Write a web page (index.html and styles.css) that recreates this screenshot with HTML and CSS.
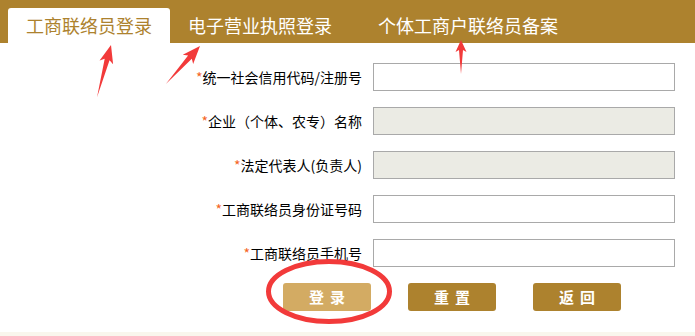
FILE: index.html
```html
<!DOCTYPE html>
<html lang="zh-CN">
<head>
<meta charset="utf-8">
<title>工商联络员登录</title>
<link rel="stylesheet" href="styles.css">
</head>
<body>
<div class="page">
  <div class="tabs">
    <div class="tab active">工商联络员登录</div>
    <div class="tab">电子营业执照登录</div>
    <div class="tab tab-third">个体工商户联络员备案</div>
  </div>
  <form class="form">
    <div class="row">
      <label class="label"><span class="star">*</span>统一社会信用代码/注册号</label>
      <input class="input" type="text">
    </div>
    <div class="row">
      <label class="label"><span class="star">*</span>企业（个体、农专）名称</label>
      <input class="input disabled" type="text" disabled>
    </div>
    <div class="row">
      <label class="label"><span class="star">*</span>法定代表人(负责人)</label>
      <input class="input disabled" type="text" disabled>
    </div>
    <div class="row">
      <label class="label"><span class="star">*</span>工商联络员身份证号码</label>
      <input class="input" type="text">
    </div>
    <div class="row">
      <label class="label"><span class="star">*</span>工商联络员手机号</label>
      <input class="input" type="text">
    </div>
    <div class="buttons">
      <button type="button" class="btn btn-login">登录</button>
      <button type="button" class="btn">重置</button>
      <button type="button" class="btn">返回</button>
    </div>
  </form>
  <div class="footer-strip"></div>
  <svg class="annotations" width="695" height="336" viewBox="0 0 695 336">
    <g fill="#f23a3a">
      <polygon transform="translate(111,45) rotate(15)" points="0,0 7,18 2.5,15 0,54 -2.5,15 -7,18"/>
      <polygon transform="translate(200,46) rotate(42)" points="0,0 7,18 2.5,15 0,51 -2.5,15 -7,18"/>
      <polygon transform="translate(461,40)" points="0,0 5.5,12 2,10 0,34 -2,10 -5.5,12"/>
    </g>
    <ellipse cx="329" cy="291.5" rx="60.5" ry="30" fill="none" stroke="#f23a3a" stroke-width="5"/>
  </svg>
</div>
</body>
</html>
```

FILE: styles.css
```css
* { box-sizing: border-box; }
html, body { margin: 0; padding: 0; background: #fff; }
body {
  font-family: "Noto Sans CJK SC", "Noto Sans", "Liberation Sans", sans-serif;
  color: #000;
}
.page {
  position: relative;
  width: 695px;
  height: 336px;
  overflow: hidden;
}
.tabs {
  display: flex;
  align-items: flex-end;
  height: 43px;
  background: #ad822e;
  padding-left: 8px;
}
.tab {
  height: 35px;
  padding: 0 18px;
  font-size: 18px;
  line-height: 35px;
  color: #fff;
  white-space: nowrap;
}
.tab.active {
  background: #fff;
  color: #ad822e;
  border-radius: 3px 3px 0 0;
}
.tab-third { margin-left: 10px; }
.form {
  padding-top: 20px;
  margin: 0;
}
.row {
  display: flex;
  align-items: center;
  height: 28px;
  margin-bottom: 16px;
}
.label {
  width: 362px;
  text-align: right;
  font-size: 14px;
  line-height: 28px;
  white-space: nowrap;
}
.star { color: #f5651f; }
.input {
  margin-left: 11px;
  width: 302px;
  height: 28px;
  border: 1px solid #a9a9a9;
  background: #fff;
  padding: 0 4px;
  font: inherit;
  outline: none;
}
.input.disabled { background: #ebebe4; }
.buttons {
  display: flex;
  gap: 37px;
  padding-left: 283px;
  height: 28px;
}
.btn {
  width: 88px;
  height: 28px;
  border: none;
  border-radius: 3px;
  background: #ad822e;
  color: #fff;
  font-family: inherit;
  font-size: 15px;
  font-weight: bold;
  letter-spacing: 6px;
  text-indent: 6px;
  padding: 0;
  line-height: 28px;
}
.btn-login { background: #d3ab63; }
.footer-strip {
  position: absolute;
  left: 0;
  right: 0;
  top: 332px;
  height: 4px;
  background: #f9f6ed;
}
.annotations {
  position: absolute;
  left: 0;
  top: 0;
  pointer-events: none;
}
```
